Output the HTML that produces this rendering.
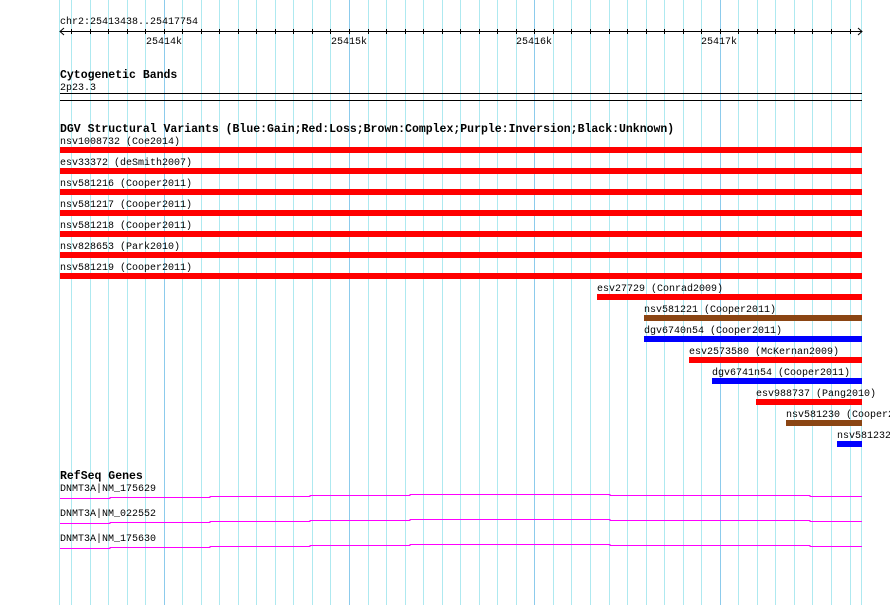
<!DOCTYPE html>
<html><head><meta charset="utf-8"><style>
html,body{margin:0;padding:0;background:#fff;width:890px;height:605px;overflow:hidden}
svg text{font-family:"Liberation Mono",monospace;font-size:10px;fill:#000}
svg text.b{font-weight:bold;font-size:11.5px}
</style></head><body>
<svg width="890" height="605" xmlns="http://www.w3.org/2000/svg" shape-rendering="crispEdges">
<g id="grid" stroke="#aee9f0" stroke-width="1">
<line x1="59.5" y1="0" x2="59.5" y2="605"/>
<line x1="861.5" y1="0" x2="861.5" y2="605"/>
</g>
<script>
</script>
<g stroke="#aee9f0">
<line x1="71.5" y1="0" x2="71.5" y2="605"/><line x1="90.5" y1="0" x2="90.5" y2="605"/><line x1="108.5" y1="0" x2="108.5" y2="605"/><line x1="127.5" y1="0" x2="127.5" y2="605"/><line x1="145.5" y1="0" x2="145.5" y2="605"/>
<line x1="182.5" y1="0" x2="182.5" y2="605"/><line x1="201.5" y1="0" x2="201.5" y2="605"/><line x1="219.5" y1="0" x2="219.5" y2="605"/><line x1="238.5" y1="0" x2="238.5" y2="605"/><line x1="256.5" y1="0" x2="256.5" y2="605"/><line x1="275.5" y1="0" x2="275.5" y2="605"/><line x1="293.5" y1="0" x2="293.5" y2="605"/><line x1="312.5" y1="0" x2="312.5" y2="605"/><line x1="330.5" y1="0" x2="330.5" y2="605"/>
<line x1="368.5" y1="0" x2="368.5" y2="605"/><line x1="386.5" y1="0" x2="386.5" y2="605"/><line x1="405.5" y1="0" x2="405.5" y2="605"/><line x1="423.5" y1="0" x2="423.5" y2="605"/><line x1="442.5" y1="0" x2="442.5" y2="605"/><line x1="460.5" y1="0" x2="460.5" y2="605"/><line x1="479.5" y1="0" x2="479.5" y2="605"/><line x1="497.5" y1="0" x2="497.5" y2="605"/><line x1="516.5" y1="0" x2="516.5" y2="605"/>
<line x1="553.5" y1="0" x2="553.5" y2="605"/><line x1="571.5" y1="0" x2="571.5" y2="605"/><line x1="590.5" y1="0" x2="590.5" y2="605"/><line x1="609.5" y1="0" x2="609.5" y2="605"/><line x1="627.5" y1="0" x2="627.5" y2="605"/><line x1="646.5" y1="0" x2="646.5" y2="605"/><line x1="664.5" y1="0" x2="664.5" y2="605"/><line x1="683.5" y1="0" x2="683.5" y2="605"/><line x1="701.5" y1="0" x2="701.5" y2="605"/>
<line x1="738.5" y1="0" x2="738.5" y2="605"/><line x1="757.5" y1="0" x2="757.5" y2="605"/><line x1="775.5" y1="0" x2="775.5" y2="605"/><line x1="794.5" y1="0" x2="794.5" y2="605"/><line x1="812.5" y1="0" x2="812.5" y2="605"/><line x1="831.5" y1="0" x2="831.5" y2="605"/><line x1="850.5" y1="0" x2="850.5" y2="605"/>
</g>
<g stroke="#8ccbec">
<line x1="164.5" y1="0" x2="164.5" y2="605"/><line x1="349.5" y1="0" x2="349.5" y2="605"/><line x1="534.5" y1="0" x2="534.5" y2="605"/><line x1="720.5" y1="0" x2="720.5" y2="605"/>
</g>
<!-- ruler -->
<text x="60" y="24">chr2:25413438..25417754</text>
<g stroke="#000">
<line x1="60" y1="31.5" x2="862" y2="31.5"/>
<polyline points="64,28 60,31.5 64,35" fill="none" shape-rendering="auto"/>
<polyline points="858,28 862,31.5 858,35" fill="none" shape-rendering="auto"/>
</g>
<g stroke="#000">
<line x1="71.5" y1="29" x2="71.5" y2="34"/><line x1="90.5" y1="29" x2="90.5" y2="34"/><line x1="108.5" y1="29" x2="108.5" y2="34"/><line x1="127.5" y1="29" x2="127.5" y2="34"/><line x1="145.5" y1="29" x2="145.5" y2="34"/><line x1="164.5" y1="29" x2="164.5" y2="34"/><line x1="182.5" y1="29" x2="182.5" y2="34"/><line x1="201.5" y1="29" x2="201.5" y2="34"/><line x1="219.5" y1="29" x2="219.5" y2="34"/><line x1="238.5" y1="29" x2="238.5" y2="34"/><line x1="256.5" y1="29" x2="256.5" y2="34"/><line x1="275.5" y1="29" x2="275.5" y2="34"/><line x1="293.5" y1="29" x2="293.5" y2="34"/><line x1="312.5" y1="29" x2="312.5" y2="34"/><line x1="330.5" y1="29" x2="330.5" y2="34"/><line x1="349.5" y1="29" x2="349.5" y2="34"/><line x1="368.5" y1="29" x2="368.5" y2="34"/><line x1="386.5" y1="29" x2="386.5" y2="34"/><line x1="405.5" y1="29" x2="405.5" y2="34"/><line x1="423.5" y1="29" x2="423.5" y2="34"/><line x1="442.5" y1="29" x2="442.5" y2="34"/><line x1="460.5" y1="29" x2="460.5" y2="34"/><line x1="479.5" y1="29" x2="479.5" y2="34"/><line x1="497.5" y1="29" x2="497.5" y2="34"/><line x1="516.5" y1="29" x2="516.5" y2="34"/><line x1="534.5" y1="29" x2="534.5" y2="34"/><line x1="553.5" y1="29" x2="553.5" y2="34"/><line x1="571.5" y1="29" x2="571.5" y2="34"/><line x1="590.5" y1="29" x2="590.5" y2="34"/><line x1="609.5" y1="29" x2="609.5" y2="34"/><line x1="627.5" y1="29" x2="627.5" y2="34"/><line x1="646.5" y1="29" x2="646.5" y2="34"/><line x1="664.5" y1="29" x2="664.5" y2="34"/><line x1="683.5" y1="29" x2="683.5" y2="34"/><line x1="701.5" y1="29" x2="701.5" y2="34"/><line x1="720.5" y1="29" x2="720.5" y2="34"/><line x1="738.5" y1="29" x2="738.5" y2="34"/><line x1="757.5" y1="29" x2="757.5" y2="34"/><line x1="775.5" y1="29" x2="775.5" y2="34"/><line x1="794.5" y1="29" x2="794.5" y2="34"/><line x1="812.5" y1="29" x2="812.5" y2="34"/><line x1="831.5" y1="29" x2="831.5" y2="34"/><line x1="850.5" y1="29" x2="850.5" y2="34"/>
</g>
<text x="146" y="44">25414k</text>
<text x="331" y="44">25415k</text>
<text x="516" y="44">25416k</text>
<text x="701" y="44">25417k</text>
<!-- cyto -->
<text class="b" x="60" y="78">Cytogenetic Bands</text>
<text x="60" y="90">2p23.3</text>
<rect x="60" y="93" width="802" height="1" fill="#000"/>
<rect x="60" y="100" width="802" height="1" fill="#000"/>
<!-- DGV -->
<text class="b" x="60" y="132">DGV Structural Variants (Blue:Gain;Red:Loss;Brown:Complex;Purple:Inversion;Black:Unknown)</text>
<text x="60" y="144">nsv1008732 (Coe2014)</text><rect x="60" y="147" width="802" height="6" fill="#f00"/>
<text x="60" y="165">esv33372 (deSmith2007)</text><rect x="60" y="168" width="802" height="6" fill="#f00"/>
<text x="60" y="186">nsv581216 (Cooper2011)</text><rect x="60" y="189" width="802" height="6" fill="#f00"/>
<text x="60" y="207">nsv581217 (Cooper2011)</text><rect x="60" y="210" width="802" height="6" fill="#f00"/>
<text x="60" y="228">nsv581218 (Cooper2011)</text><rect x="60" y="231" width="802" height="6" fill="#f00"/>
<text x="60" y="249">nsv828653 (Park2010)</text><rect x="60" y="252" width="802" height="6" fill="#f00"/>
<text x="60" y="270">nsv581219 (Cooper2011)</text><rect x="60" y="273" width="802" height="6" fill="#f00"/>
<text x="597" y="291">esv27729 (Conrad2009)</text><rect x="597" y="294" width="265" height="6" fill="#f00"/>
<text x="644" y="312">nsv581221 (Cooper2011)</text><rect x="644" y="315" width="218" height="6" fill="#8b4513"/>
<text x="644" y="333">dgv6740n54 (Cooper2011)</text><rect x="644" y="336" width="218" height="6" fill="#00f"/>
<text x="689" y="354">esv2573580 (McKernan2009)</text><rect x="689" y="357" width="173" height="6" fill="#f00"/>
<text x="712" y="375">dgv6741n54 (Cooper2011)</text><rect x="712" y="378" width="150" height="6" fill="#00f"/>
<text x="756" y="396">esv988737 (Pang2010)</text><rect x="756" y="399" width="106" height="6" fill="#f00"/>
<text x="786" y="417">nsv581230 (Cooper2011)</text><rect x="786" y="420" width="76" height="6" fill="#8b4513"/>
<text x="837" y="438">nsv581232</text><rect x="837" y="441" width="25" height="6" fill="#00f"/>
<!-- RefSeq -->
<text class="b" x="60" y="479">RefSeq Genes</text>
<text x="60" y="491">DNMT3A|NM_175629</text>
<text x="60" y="516">DNMT3A|NM_022552</text>
<text x="60" y="541">DNMT3A|NM_175630</text>
<g fill="none" stroke="#f0f" stroke-width="1">
<polyline points="60,498.5 110,498.5 110,497.5 210,497.5 210,496.5 310,496.5 310,495.5 410,495.5 410,494.5 610,494.5 610,495.5 810,495.5 810,496.5 862,496.5"/>
<polyline points="60,523.5 110,523.5 110,522.5 210,522.5 210,521.5 310,521.5 310,520.5 410,520.5 410,519.5 610,519.5 610,520.5 810,520.5 810,521.5 862,521.5"/>
<polyline points="60,548.5 110,548.5 110,547.5 210,547.5 210,546.5 310,546.5 310,545.5 410,545.5 410,544.5 610,544.5 610,545.5 810,545.5 810,546.5 862,546.5"/>
</g>
</svg>
</body></html>
